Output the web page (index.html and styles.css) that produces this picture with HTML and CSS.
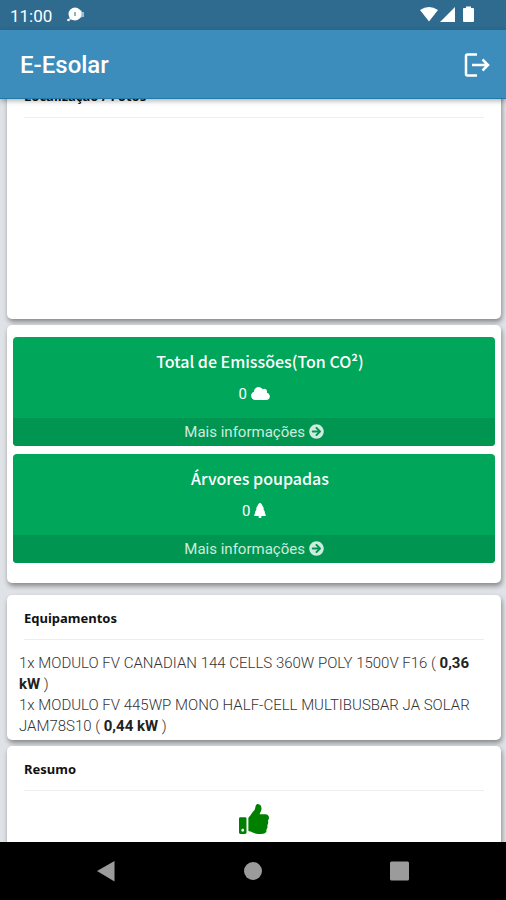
FILE: index.html
```html
<!DOCTYPE html>
<html lang="pt-BR">
<head>
<meta charset="utf-8">
<meta name="viewport" content="width=device-width, initial-scale=1">
<title>E-Esolar</title>
<link rel="stylesheet" href="styles.css">
</head>
<body>
<div class="status">
  <span class="clock">11:00</span>
  <svg class="notice" viewBox="0 0 18 16" aria-hidden="true"><path d="M16 5v5" stroke="#9dbdd2" stroke-width="2"/><circle cx="8" cy="7" r="6.500" fill="#fff"/><path d="M12 3.500h2.500v7H12z" fill="#fff"/><circle cx="1.500" cy="13" r="1.300" fill="#fff"/><path d="M2.500 9v3.500h4z" fill="#fff"/><path d="M8 5v4" stroke="#6f9ab5" stroke-width="1.500"/></svg>
  <svg class="system" viewBox="0 0 54 18" aria-hidden="true"><path fill="#fff" d="M0 4Q9-2 18 4L9 15.500zM20 16 35 1v15zM43 3q0-1 1-1h2V.5h5V2h2q1 0 1 1v12q0 1-1 1h-9q-1 0-1-1z"/></svg>
</div>
<header class="appbar">
  <h1>E-Esolar</h1>
  <button class="logout" type="button" aria-label="Sair"><svg viewBox="0 0 26 24" fill="none" stroke="#fff" stroke-width="2.500"><path d="M13 1.500H3.500q-1.500 0-1.500 1.500v18q0 1.500 1.500 1.500H13M8 12h16M18.500 6.500 24 12l-5.500 5.500"/></svg></button>
</header>
<main class="view">
  <div class="content">
    <section class="card map">
      <h2>Localização / Fotos</h2>
    </section>
    <section class="card stats">
      <article class="box">
        <h3>Total de Emissões(Ton CO²)</h3>
        <p>0 <svg class="cloud" viewBox="0 0 640 512" aria-hidden="true"><path d="M537.600 226.600c4.100-10.700 6.400-22.400 6.400-34.600 0-53-43-96-96-96-19.700 0-38.100 6-53.300 16.200C367 64.200 315.300 32 256 32c-88.400 0-160 71.600-160 160 0 2.700.1 5.400.2 8.100C40.200 219.800 0 273.200 0 336c0 79.500 64.500 144 144 144h368c70.700 0 128-57.300 128-128 0-61.900-44-113.600-102.400-125.400z"/></svg></p>
        <a href="#emissoes">Mais informações <svg class="arrow" viewBox="0 0 512 512" aria-hidden="true"><path d="M256 8c137 0 248 111 248 248S393 504 256 504 8 393 8 256 119 8 256 8zm-28.900 143.600l75.500 72.400H120c-13.300 0-24 10.700-24 24v16c0 13.300 10.700 24 24 24h182.600l-75.500 72.400c-9.700 9.300-9.900 24.800-.4 34.300l11 10.900c9.400 9.400 24.600 9.400 33.900 0L404.300 273c9.400-9.400 9.400-24.600 0-33.900L271.600 106.300c-9.400-9.400-24.600-9.400-33.900 0l-11 10.900c-9.500 9.600-9.300 25.100.4 34.400z"/></svg></a>
      </article>
      <article class="box">
        <h3>Árvores poupadas</h3>
        <p>0 <svg class="tree" viewBox="0 0 12 15" aria-hidden="true"><path d="M6 0q1 0 1.700 1.200L9.600 4.800q.3.800-.1 1.200L11 9.300l-.3.700 1.100 1.800q.3 1-.8 1.200H7.300v2H4.700v-2H1q-1.100-.2-.8-1.200L1.300 10 1 9.300 2.500 6q-.4-.4-.1-1.200l1.900-3.600Q5 0 6 0z"/></svg></p>
        <a href="#arvores">Mais informações <svg class="arrow" viewBox="0 0 512 512" aria-hidden="true"><path d="M256 8c137 0 248 111 248 248S393 504 256 504 8 393 8 256 119 8 256 8zm-28.900 143.600l75.500 72.400H120c-13.300 0-24 10.700-24 24v16c0 13.300 10.700 24 24 24h182.600l-75.500 72.400c-9.700 9.300-9.900 24.800-.4 34.300l11 10.900c9.400 9.400 24.600 9.400 33.900 0L404.300 273c9.400-9.400 9.400-24.600 0-33.900L271.600 106.300c-9.400-9.400-24.600-9.400-33.900 0l-11 10.900c-9.500 9.600-9.300 25.100.4 34.400z"/></svg></a>
      </article>
    </section>
    <section class="card">
      <h2>Equipamentos</h2>
      <ul class="equipment">
        <li>1x MODULO FV CANADIAN 144 CELLS 360W POLY 1500V F16 ( <b>0,36 kW</b> )</li>
        <li>1x MODULO FV 445WP MONO HALF-CELL MULTIBUSBAR JA SOLAR JAM78S10 ( <b>0,44 kW</b> )</li>
      </ul>
    </section>
    <section class="card summary">
      <h2>Resumo</h2>
      <svg class="thumb" viewBox="0 0 512 512" aria-hidden="true"><path d="M104 224H24c-13.255 0-24 10.745-24 24v240c0 13.255 10.745 24 24 24h80c13.255 0 24-10.745 24-24V248c0-13.255-10.745-24-24-24zM64 472c-13.255 0-24-10.745-24-24s10.745-24 24-24 24 10.745 24 24-10.745 24-24 24zM384 81.452c0 42.416-25.970 66.208-33.277 94.548h101.723c33.397 0 59.397 27.746 59.553 58.098.084 17.938-7.546 37.249-19.439 49.197l-.11.11c9.836 23.337 8.237 56.037-9.308 79.469 8.681 25.895-.069 57.704-16.382 74.757 4.298 17.598 2.244 32.575-6.148 44.632C440.202 511.587 389.616 512 346.839 512l-2.845-.001c-48.287-.017-87.806-17.598-119.560-31.725-15.957-7.099-36.821-15.887-52.651-16.178-6.540-.12-11.783-5.457-11.783-11.998v-213.770c0-3.200 1.282-6.271 3.558-8.521 39.614-39.144 56.648-80.587 89.117-113.111 14.804-14.832 20.188-37.236 25.393-58.902C282.515 39.293 291.817 0 312 0c24 0 72 8 72 81.452z"/></svg>
    </section>
  </div>
</main>
<nav class="keys" aria-label="Sistema">
  <button type="button" aria-label="Voltar"><svg viewBox="0 0 22 22"><path d="M19.500 1v20.500L2 11z"/></svg></button>
  <button type="button" aria-label="Início"><svg viewBox="0 0 22 22"><circle cx="11" cy="11" r="9"/></svg></button>
  <button type="button" aria-label="Recentes"><svg viewBox="0 0 22 22"><rect x="1" y="1.500" width="19" height="19" rx="1.500"/></svg></button>
</nav>
</body>
</html>
```
FILE: styles.css
```css
* { box-sizing: border-box; }
body {
  margin: 0;
  height: 100vh;
  display: flex;
  flex-direction: column;
  background: #dfe2e6;
  color: #333;
  font: 15px/21px Roboto, sans-serif;
}
h1, h2, h3, p, ul { margin: 0; padding: 0; }
svg { display: block; }
button { border: 0; padding: 0; background: none; }

.status {
  flex: none;
  height: 30px;
  padding: 0 32px 0 10px;
  display: flex;
  align-items: center;
  gap: 15px;
  background: #2e6b8f;
  color: #fff;
}
.clock { font-size: 17px; line-height: 30px; padding-top: 2px; }
.notice { width: 18px; height: 16px; }
.system { width: 54px; height: 18px; margin-left: auto; }

.appbar {
  flex: none;
  height: 69px;
  padding: 2px 16px 0 20px;
  display: flex;
  align-items: center;
  justify-content: space-between;
  background: #3c8dbc;
  border-bottom: 1px solid #1f7aa8;
  box-shadow: 0 2px 5px rgba(0, 0, 0, .3);
  position: relative;
  z-index: 1;
  color: #fff;
}
.appbar h1 { font-size: 24px; line-height: 32px; font-weight: 500; }
.logout svg { width: 26px; height: 24px; }

.view { flex: 1; min-height: 0; overflow: hidden; }
/* scrolled part-way through the first card */
.content { margin-top: -26px; padding: 0 5px 0 7px; }

.card {
  margin-bottom: 6px;
  padding: 0 12px 3px;
  background: #fff;
  border-radius: 5px;
  box-shadow: 1px 3px 5px rgba(0, 0, 0, .4);
}
.card h2 {
  margin: 0 5px 13px;
  padding: 12px 0 10px;
  border-bottom: 1px solid #eee;
  color: #111;
  font: bold 13px/22px "Noto Sans", sans-serif;
}
.map { height: 246px; }
.stats { margin-bottom: 12px; padding: 12px 6px 20px; }
.box {
  overflow: hidden;
  border-radius: 4px;
  background: #00a65a;
  color: #fff;
  text-align: center;
}
.box + .box { margin-top: 8px; }
.box h3 {
  padding: 12px 0 0 12px;
  font: 500 16px/24px "Noto Sans CJK JP", sans-serif;
}
.box p {
  height: 45px;
  padding-top: 11px;
}
.box a {
  display: block;
  height: 28px;
  line-height: 28px;
  background: #009651;
  color: #cfebdd;
  text-decoration: none;
}
.box svg { display: inline-block; fill: currentColor; vertical-align: -2px; }
.cloud { width: 19px; height: 15px; }
.tree { width: 12px; height: 15px; }
.arrow { width: 15px; height: 15px; }

.equipment { list-style: none; font-weight: 300; }
.equipment b { color: #222; font-weight: 700; }
.summary { height: 160px; }
.thumb { width: 30px; height: 30px; margin: 0 auto; fill: #008000; }

.keys {
  flex: none;
  height: 58px;
  padding: 0 33px;
  display: flex;
  background: #000;
}
.keys button { flex: 1; }
.keys svg { width: 22px; height: 22px; margin: 0 auto; fill: #9b9b9b; }
```
